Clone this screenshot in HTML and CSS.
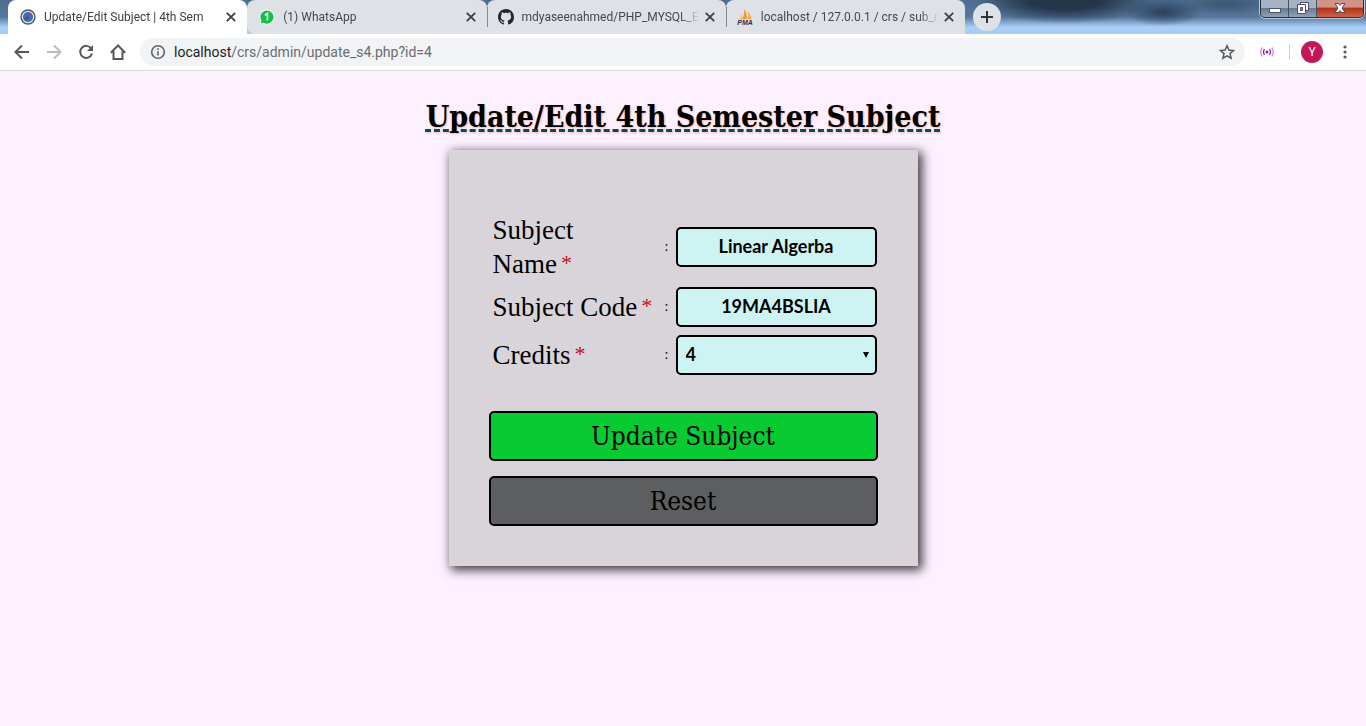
FILE: index.html
```html
<!DOCTYPE html>
<html lang="en">
<head>
<meta charset="utf-8">
<title>Update/Edit Subject | 4th Sem</title>
<link rel="stylesheet" href="styles.css">
</head>
<body>
<header class="browser">
  <div class="tabstrip">
    <div class="tabs">
      <div class="tab tab-active">
        <svg class="favicon" viewBox="0 0 16 16"><circle cx="8" cy="8" r="7" fill="#ddd" stroke="#55575c" stroke-width="1.400"/><circle cx="8" cy="8" r="5" fill="#2f6fc4"/><path d="M11.500 4.500 8.700 8.700 7.300 7.300z" fill="#e0344a"/><path d="m4.500 11.500 2.800-4.200 1.400 1.400z" fill="#39427c"/></svg>
        <span class="tab-title">Update/Edit Subject | 4th Sem</span>
        <button class="close" aria-label="Close tab"><svg viewBox="0 0 10 10"><path d="m1.500 1.500 7 7m0-7-7 7"/></svg></button>
      </div>
      <div class="tab tab-first">
        <svg class="favicon" viewBox="0 0 16 16"><path d="M8 .6a7.4 7.4 0 1 1-3.3 14L.4 15.600l1.100-4.300A7.400 7.400 0 0 1 8 .6z" fill="#fff"/><path d="M8 1.400A6.600 6.600 0 1 1 4.800 13.800L1.800 14.500l.7-2.900A6.600 6.600 0 0 1 8 1.400z" fill="#0fc144"/><path d="M6 6.200 8.400 4.600v7" fill="none" stroke="#fff" stroke-width="1.700"/></svg>
        <span class="tab-title">(1) WhatsApp</span>
        <button class="close" aria-label="Close tab"><svg viewBox="0 0 10 10"><path d="m1.500 1.500 7 7m0-7-7 7"/></svg></button>
      </div>
      <div class="tab tab-divided">
        <svg class="favicon" viewBox="0 0 16 16"><path fill="#24292e" d="M8 0C3.580 0 0 3.580 0 8c0 3.540 2.290 6.530 5.470 7.590.4.070.55-.17.55-.38 0-.19-.01-.82-.01-1.490-2.010.37-2.530-.49-2.690-.94-.09-.23-.48-.94-.82-1.130-.28-.15-.68-.52-.01-.53.63-.01 1.080.58 1.230.82.72 1.210 1.870.87 2.330.66.07-.52.28-.87.51-1.070-1.780-.2-3.640-.89-3.640-3.950 0-.87.31-1.590.82-2.150-.08-.2-.36-1.020.08-2.120 0 0 .67-.21 2.200.82.64-.18 1.320-.27 2-.27s1.360.09 2 .27c1.530-1.040 2.200-.82 2.200-.82.44 1.100.16 1.920.08 2.120.51.56.82 1.270.82 2.150 0 3.070-1.870 3.750-3.650 3.950.29.25.54.73.54 1.480 0 1.070-.01 1.930-.01 2.200 0 .21.15.46.55.38A8 8 0 0 0 16 8c0-4.420-3.580-8-8-8z"/></svg>
        <span class="tab-title">mdyaseenahmed/PHP_MYSQL_EX</span>
        <button class="close" aria-label="Close tab"><svg viewBox="0 0 10 10"><path d="m1.500 1.500 7 7m0-7-7 7"/></svg></button>
      </div>
      <div class="tab tab-divided">
        <svg class="favicon" viewBox="0 0 16 16"><path d="M5 2c.2 4-1 6.500-4 8.500 2 .2 3 0 4.300-.5z" fill="#fbc678"/><path d="M7 0c2.500 3 3.200 6.500 2.800 10L4.500 10.500C7 8 7.500 4 7 0z" fill="#f79a2d"/><path d="M11 2.500c2 2 3 4.500 3.600 7.500l-4.200.2c1-2 1.200-5 .6-7.700z" fill="#f9a947"/><text x="8" y="15.700" class="pma" text-anchor="middle">PMA</text></svg>
        <span class="tab-title">localhost / 127.0.0.1 / crs / sub_re</span>
        <button class="close" aria-label="Close tab"><svg viewBox="0 0 10 10"><path d="m1.500 1.500 7 7m0-7-7 7"/></svg></button>
      </div>
    </div>
    <button class="new-tab" aria-label="New tab"><svg viewBox="0 0 14 14"><path d="M7 1v12M1 7h12"/></svg></button>
    <div class="window-controls">
      <button class="win" aria-label="Minimize"><svg viewBox="0 0 14 14"><rect x="1.500" y="7.500" width="11" height="4" fill="#fff" stroke="#4a5365"/></svg></button>
      <button class="win" aria-label="Restore"><svg viewBox="0 0 14 14"><path d="M4.500 1.500h8v8h-8z" fill="#fff" stroke="#4a5365"/><path d="M1.500 3.500h8v9h-8z" fill="#fff" stroke="#4a5365"/><path d="M4.500 6.500h2v3h-2z" fill="#8c9bb0" stroke="#4a5365"/></svg></button>
      <button class="win win-close" aria-label="Close"><svg viewBox="0 0 14 14"><path d="M2 2.500h3.500L7 4.500l1.500-2H12L9 7l3 4.500H8.500L7 9.500l-1.500 2H2L5 7z" fill="#fff" stroke="#4b4a58"/></svg></button>
    </div>
  </div>
  <div class="toolbar">
    <button class="nav" aria-label="Back"><svg viewBox="0 0 16 16"><path d="M15 8H2m6-6.500L1.500 8 8 14.500"/></svg></button>
    <button class="nav nav-off" aria-label="Forward"><svg viewBox="0 0 16 16"><path d="M1 8h13M8 1.500 14.500 8 8 14.500"/></svg></button>
    <button class="nav" aria-label="Reload"><svg viewBox="0 0 16 16"><path d="M13.200 4.500A6 6 0 1 0 14 9.500"/><path d="M15 1v6H9z" fill="#55595e" stroke="none"/></svg></button>
    <button class="nav" aria-label="Home"><svg viewBox="0 0 16 16"><path d="M.8 8.700 8 1.500l7.200 7.200M3.500 7v8h9V7"/></svg></button>
    <div class="omnibox">
      <svg class="info" viewBox="0 0 16 16"><circle cx="8" cy="8" r="6.300"/><path d="M8 7.200v4.300M8 4.300v1.700"/></svg>
      <span class="url"><span class="url-host">localhost</span>/crs/admin/update_s4.php?id=4</span>
      <button class="star" aria-label="Bookmark"><svg viewBox="0 0 16 16"><path d="m8 1.800 1.900 4.300 4.600.4-3.500 3.100 1.100 4.600L8 11.800l-4.100 2.400L5 9.600 1.500 6.500l4.600-.4z"/></svg></button>
    </div>
    <button class="extension" aria-label="Extension"><svg viewBox="0 0 16 12"><circle cx="8" cy="6" r="1.500" fill="#8425a8"/><path d="M5.500 3.200q-2 2.800 0 5.600m5-5.600q2 2.800 0 5.600" stroke="#8425a8" stroke-width="1.300"/><path d="M3.300 1.500q-3.200 4.500 0 9m9.400-9q3.200 4.500 0 9" stroke="#cd8bdd" stroke-width="1.300"/></svg></button>
    <span class="separator"></span>
    <button class="avatar">Y</button>
    <button class="menu" aria-label="Menu"><svg viewBox="0 0 4 16"><circle cx="2" cy="3" r="1.600"/><circle cx="2" cy="8" r="1.600"/><circle cx="2" cy="13" r="1.600"/></svg></button>
  </div>
</header>
<main class="page">
  <h1 class="heading">Update/Edit 4th Semester Subject</h1>
  <form class="card">
    <div class="fields">
      <label class="label label-wrap" for="name">Subject Name<span class="required">*</span></label>
      <span class="colon">:</span>
      <input class="control" id="name" type="text" value="Linear Algerba">
      <label class="label" for="code">Subject Code<span class="required">*</span></label>
      <span class="colon">:</span>
      <input class="control" id="code" type="text" value="19MA4BSLIA">
      <label class="label" for="credits">Credits<span class="required">*</span></label>
      <span class="colon">:</span>
      <div class="select-wrap">
        <select class="control control-select" id="credits"><option>4</option></select>
        <svg class="arrow" viewBox="0 0 6 6"><path d="M0 0h6L3 6z"/></svg>
      </div>
    </div>
    <button class="action action-update" type="submit">Update Subject</button>
    <button class="action action-reset" type="reset">Reset</button>
  </form>
</main>
</body>
</html>
```
FILE: styles.css
```css
* { box-sizing: border-box; }
body {
  margin: 0;
  min-height: 100vh;
  background: #fdf0ff;
  font-family: "Liberation Serif", serif;
  color: #000;
}
button { padding: 0; border: 0; background: none; font: inherit; color: inherit; }
svg { display: block; }

.browser { font-family: "Noto Sans", sans-serif; }
.tabstrip {
  display: flex;
  align-items: center;
  height: 34px;
  padding: 0 2px 0 8px;
  background:
    radial-gradient(ellipse 90px 24px at 1065px 0, #24364a 40%, transparent),
    radial-gradient(ellipse 40px 14px at 1163px 12px, #2a405a, transparent),
    radial-gradient(ellipse 50px 12px at 1225px 4px, #3c5673, transparent),
    linear-gradient(#4d6d90 0, #58779c 50%, #84a7cf 66%, #a9d0f8 80%, #a5cbf3);
}
.tabs { display: flex; flex: 0 1 957px; min-width: 0; height: 34px; }
.tab {
  display: flex;
  flex: 1 1 0;
  align-items: center;
  min-width: 0;
  padding: 0 10px 0 12px;
  border-radius: 8px 8px 0 0;
  background: #dee1e6;
  color: #45484c;
}
.tab-active { background: #fff; color: #3c4043; }
.tab-first { border-bottom-left-radius: 8px; }
.tab-divided::before {
  content: "";
  width: 1px;
  height: 20px;
  margin: 0 10px 0 -12px;
  background: #85888d;
}
.favicon { flex: none; width: 16px; height: 16px; }
.pma { font: italic bold 7px "Liberation Sans", sans-serif; fill: #2e2f5b; }
.tab-title {
  flex: 1;
  min-width: 0;
  margin: 0 4px 0 8px;
  overflow: hidden;
  white-space: nowrap;
  font: 12px/16px Roboto, sans-serif;
  -webkit-mask-image: linear-gradient(to left, transparent, #000 20px);
  mask-image: linear-gradient(to left, transparent, #000 20px);
}
.close { flex: none; width: 12px; height: 12px; }
.close svg { width: 12px; height: 12px; fill: none; stroke: #3c4043; stroke-width: 1.5; }
.new-tab {
  display: grid;
  place-items: center;
  width: 28px;
  height: 28px;
  margin-left: 8px;
  border-radius: 50%;
  background: #dee1e6;
}
.new-tab svg { width: 14px; height: 14px; stroke: #303336; stroke-width: 2; }
.window-controls {
  display: flex;
  align-self: flex-start;
  height: 18px;
  margin-left: auto;
  border: 1px solid #26313f;
  border-top: 0;
  border-radius: 0 0 5px 5px;
  overflow: hidden;
  box-shadow: 0 0 0 1px #b6c7d9;
}
.win {
  display: grid;
  place-items: center;
  width: 28px;
  padding-bottom: 2px;
  background: linear-gradient(#a7b3c3 45%, #697b91 50%, #8fa3ba);
  border-right: 1px solid #465467;
}
.win svg { width: 14px; height: 14px; }
.win-close { width: 46px; border-right: 0; background: linear-gradient(#cf9388 40%, #b33218 50%, #d06448); }

.toolbar {
  display: flex;
  align-items: center;
  height: 37px;
  padding: 0 13px 0 14px;
  background: #fff;
  border-bottom: 1px solid #d9dadc;
}
.nav { width: 16px; margin-right: 16px; }
.nav svg { width: 16px; height: 16px; fill: none; stroke: #55595e; stroke-width: 2; }
.nav-off { opacity: .4; }
.omnibox {
  display: flex;
  flex: 1;
  align-items: center;
  height: 28px;
  min-width: 0;
  margin-left: -2px;
  padding: 0 10px;
  border-radius: 14px;
  background: #f1f3f4;
}
.info { width: 16px; height: 16px; margin-right: 8px; fill: none; stroke: #5f6368; stroke-width: 1.6; }
.url { flex: 1; font-family: Roboto, sans-serif; font-size: 14px; color: #6a6d71; white-space: nowrap; }
.url-host { color: #202124; }
.star svg { width: 16px; height: 16px; fill: none; stroke: #55595e; stroke-width: 1.5; }
.extension { margin: 0 14px; }
.extension svg { width: 16px; height: 12px; fill: none; }
.separator { width: 1px; height: 16px; background: #cfd1d4; }
.avatar {
  width: 22px;
  height: 22px;
  margin: 0 20px 0 11px;
  border-radius: 50%;
  background: #c2185b;
  color: #fff;
  font: 12px/22px Roboto, sans-serif;
}
.menu { margin-right: 6px; }
.menu svg { width: 4px; height: 16px; fill: #55595e; }

.page { display: flex; flex-direction: column; align-items: center; padding-top: 24px; }
.heading {
  margin: 0 0 11px;
  font: bold 30px/44px "DejaVu Serif Condensed", "DejaVu Serif", serif;
  text-decoration: underline dashed #0b4a5c 3px;
  text-underline-offset: 2px;
  text-shadow: 1px 1px 2px #f4b8a8;
}
.card {
  display: flex;
  flex-direction: column;
  width: 469px;
  max-width: 100%;
  padding: 63px 40px 40px;
  background: #d9d4da;
  box-shadow: 3px 3px 10px 1px #3c3640;
}
.fields {
  display: grid;
  grid-template-columns: minmax(0, 1fr) 3px 201px;
  grid-auto-rows: minmax(44px, auto);
  align-items: center;
  gap: 4px 8px;
  margin-bottom: 34px;
  padding: 0 1px 0 4px;
}
.label { font-size: 27px; line-height: 34px; white-space: nowrap; }
.label-wrap { width: min-content; white-space: normal; }
.required { margin-left: 4px; color: #bd1016; font-size: 22px; line-height: 20px; vertical-align: 3px; }
.colon { font-size: 14px; }
.control {
  width: 100%;
  height: 40px;
  padding: 0 8px 2px;
  border: 2px solid #000;
  border-radius: 5px;
  background: #cdf3f3;
  color: #000;
  font: bold 18px Lato, sans-serif;
  text-align: center;
}
.select-wrap { position: relative; }
.control-select { display: block; appearance: none; text-align: left; }
.arrow { position: absolute; top: 17px; right: 8px; width: 6px; height: 6px; pointer-events: none; }
.action {
  height: 50px;
  border: 2px solid #000;
  border-radius: 5px;
  font-family: "DejaVu Serif Condensed", "DejaVu Serif", serif;
  font-size: 26px;
}
.action-update { background: #08cb32; }
.action-reset { margin-top: 15px; background: #5d5e60; }
```
